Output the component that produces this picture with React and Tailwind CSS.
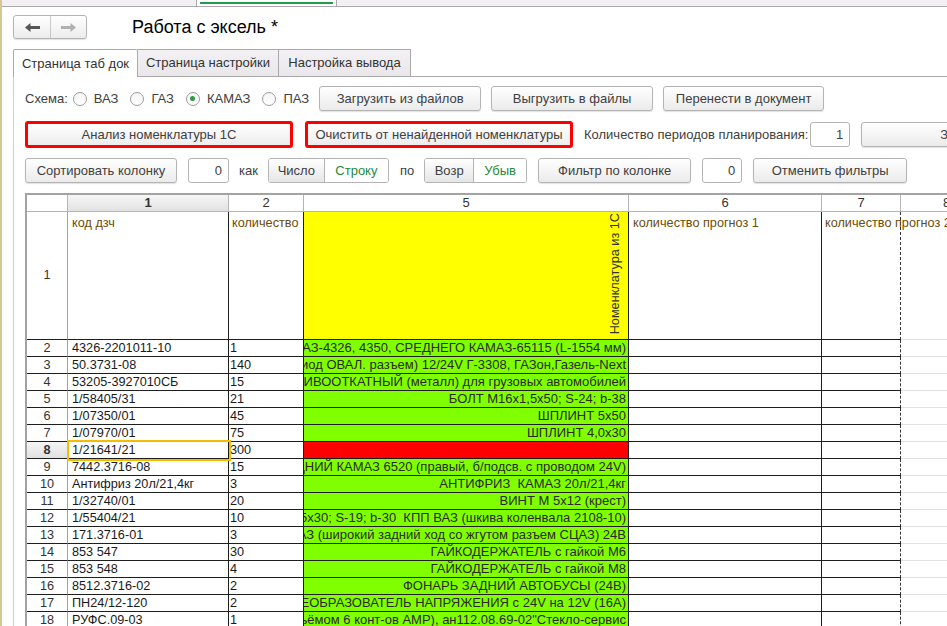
import React from 'react';

const FONT = '"Liberation Sans", Arial, sans-serif';

const rows = [
    ['4326-2201011-10', '1', 'ВАЛ КАРДАННЫЙ КАМАЗ-4326, 4350, СРЕДНЕГО КАМАЗ-65115 (L-1554 мм)'],
    ['50.3731-08', '140', 'ФАРА ПРОТИВОТУМАННАЯ (светодиод ОВАЛ. разъем) 12/24V Г-3308, ГАЗон,Газель-Next'],
    ['53205-3927010СБ', '15', 'УПОР ПРОТИВООТКАТНЫЙ (металл) для грузовых автомобилей'],
    ['1/58405/31', '21', 'БОЛТ М16х1,5х50; S-24; b-38'],
    ['1/07350/01', '45', 'ШПЛИНТ 5х50'],
    ['1/07970/01', '75', 'ШПЛИНТ 4,0х30'],
    ['1/21641/21', '300', null],
    ['7442.3716-08', '15', 'ФОНАРЬ ЗАДНИЙ КАМАЗ 6520 (правый, б/подсв. с проводом 24V)'],
    ['Антифриз 20л/21,4кг', '3', 'АНТИФРИЗ  КАМАЗ 20л/21,4кг'],
    ['1/32740/01', '20', 'ВИНТ М 5х12 (крест)'],
    ['1/55404/21', '10', 'БОЛТ М12х1,25х30; S-19; b-30  КПП ВАЗ (шкива коленвала 2108-10)'],
    ['171.3716-01', '3', 'ФОНАРЬ ЗАДНИЙ ПАЗ (широкий задний ход со жгутом разъем СЦАЗ) 24В'],
    ['853 547', '30', 'ГАЙКОДЕРЖАТЕЛЬ с гайкой М6'],
    ['853 548', '4', 'ГАЙКОДЕРЖАТЕЛЬ с гайкой М8'],
    ['8512.3716-02', '2', 'ФОНАРЬ ЗАДНИЙ АВТОБУСЫ (24В)'],
    ['ПН24/12-120', '2', 'ПРЕОБРАЗОВАТЕЛЬ НАПРЯЖЕНИЯ с 24V на 12V (16А)'],
    ['РУФС.09-03', '1', 'ФОНАРЬ задний (с разъёмом 6 конт-ов AMP), ан112.08.69-02"Стекло-сервис'],
];

const Btn = ({ children, className = '' }) => (
    <div className={`h-[25px] shrink-0 flex items-center justify-center rounded-[3px] border border-[#b4b4b4] bg-linear-to-b from-white to-[#ebebeb] shadow-[0_1px_1px_rgba(0,0,0,0.12)] text-[13px] text-[#404040] whitespace-nowrap ${className}`}>
        {children}
    </div>
);

const RedBtn = ({ children, className = '' }) => (
    <div className={`h-[27px] shrink-0 flex items-center justify-center rounded-[3px] border-[3px] border-[#ff0000] bg-linear-to-b from-white to-[#ededed] text-[13px] text-[#404040] whitespace-nowrap ${className}`}>
        {children}
    </div>
);

const Field = ({ value, className = '' }) => (
    <div className={`h-[25px] shrink-0 flex items-center justify-end pr-[6px] rounded-[3px] border border-[#b4b4b4] bg-white text-[13px] text-[#404040] ${className}`}>
        {value}
    </div>
);

const Radio = ({ label, checked }) => (
    <div className="flex items-center shrink-0">
        <div className="w-[14px] h-[14px] rounded-full border border-[#9c9c9c] bg-linear-to-b from-[#f4f4f4] to-white flex items-center justify-center">
            {checked && <div className="w-[5px] h-[5px] rounded-full bg-[#2e9a43]" />}
        </div>
        <span className="ml-[7px] text-[13px] text-[#404040]">{label}</span>
    </div>
);

const Segment = ({ left, right, lw, rw }) => (
    <div className="h-[25px] shrink-0 flex rounded-[3px] border border-[#b4b4b4] overflow-hidden text-[13px]">
        <div className={`flex items-center justify-center bg-linear-to-b from-white to-[#e6e6e6] text-[#404040] border-r border-[#b4b4b4] ${lw}`}>{left}</div>
        <div className={`flex items-center justify-center bg-white text-[#1f8a3a] ${rw}`}>{right}</div>
    </div>
);

const Arrow = ({ dir, color }) => (
    <svg width="15" height="9" viewBox="0 0 15 9">
        {dir === 'left' ? (
            <path d="M0 4.5 L5.5 0 V3 H15 V6 H5.5 V9 Z" fill={color} />
        ) : (
            <path d="M15 4.5 L9.5 0 V3 H0 V6 H9.5 V9 Z" fill={color} />
        )}
    </svg>
);

const cell = 'h-[17px] border-r border-b border-[#1e1e1e] text-[12.7px] leading-[16px] whitespace-pre overflow-hidden';
const dashedR = '[border-right-style:dashed] border-r-[#333]';

const App = () => {
    return (
        <div className="w-[947px] h-[626px] overflow-hidden bg-white border-l-2 border-[#d6c893]" style={{ fontFamily: FONT }}>
            {/* top window strip */}
            <div className="h-[7px] bg-[#f3f0f3] border-b border-[#a9a9a9] flex">
                <div className="ml-[194px] w-[141px] bg-white border-x border-[#a9a9a9]">
                    <div className="mt-[2px] mx-[3px] h-[2px] bg-[#1f9b4c]" />
                </div>
            </div>

            {/* header */}
            <div className="flex items-center mt-[8px] ml-[11px]">
                <div className="flex h-[24px] rounded-[3px] border border-[#b4b4b4] bg-linear-to-b from-white to-[#ececec] shadow-[0_1px_1px_rgba(0,0,0,0.12)]">
                    <div className="w-[37px] flex items-center justify-center border-r border-[#c8c8c8]">
                        <Arrow dir="left" color="#555555" />
                    </div>
                    <div className="w-[35px] flex items-center justify-center">
                        <Arrow dir="right" color="#b0b0b0" />
                    </div>
                </div>
                <h1 className="ml-[45px] text-[18px] text-black leading-none">Работа с эксель *</h1>
            </div>

            {/* tabs + panel */}
            <div className="ml-[11px] mt-[10px]">
                <div className="flex h-[28px] border-b border-[#a9a9a9] text-[13px] text-[#333]">
                    <div className="w-[125px] h-[28px] flex items-center justify-center bg-white border border-b-0 border-[#a9a9a9] rounded-t-[2px]">Страница таб док</div>
                    <div className="w-[141px] h-[27px] flex items-center justify-center bg-linear-to-b from-[#f3f1f3] to-[#e9e7e9] border-t border-r border-[#a9a9a9]">Страница настройки</div>
                    <div className="w-[132px] h-[27px] flex items-center justify-center bg-linear-to-b from-[#f3f1f3] to-[#e9e7e9] border-t border-r border-[#a9a9a9]">Настройка вывода</div>
                </div>

                <div className="border-l border-[#cdcdcd] pl-[11px] pt-[9px] h-[560px]">
                    {/* row 1 */}
                    <div className="flex items-center h-[25px]">
                        <span className="text-[13px] text-[#404040] mr-[5px] shrink-0">Схема:</span>
                        <Radio label="ВАЗ" />
                        <div className="ml-[12px]"><Radio label="ГАЗ" /></div>
                        <div className="ml-[12px]"><Radio label="КАМАЗ" checked /></div>
                        <div className="ml-[12px]"><Radio label="ПАЗ" /></div>
                        <Btn className="ml-[10px] w-[162px]">Загрузить из файлов</Btn>
                        <Btn className="ml-[10px] w-[162px]">Выгрузить в файлы</Btn>
                        <Btn className="ml-[10px] w-[161px]">Перенести в документ</Btn>
                    </div>

                    {/* row 2 */}
                    <div className="flex items-center mt-[10px] h-[27px]">
                        <RedBtn className="w-[268px]">Анализ номенклатуры 1С</RedBtn>
                        <RedBtn className="ml-[12px] w-[268px]">Очистить от ненайденной номенклатуры</RedBtn>
                        <span className="ml-[11px] text-[13px] text-[#404040] whitespace-nowrap shrink-0">Количество периодов планирования:</span>
                        <Field value="1" className="ml-[2px] w-[40px]" />
                        <Btn className="ml-[11px] w-[200px] !justify-start pl-[78px]">Заполнить</Btn>
                    </div>

                    {/* row 3 */}
                    <div className="flex items-center mt-[10px] h-[25px]">
                        <Btn className="w-[152px]">Сортировать колонку</Btn>
                        <Field value="0" className="ml-[11px] w-[41px]" />
                        <span className="ml-[10px] text-[13px] text-[#404040] shrink-0">как</span>
                        <div className="ml-[10px] shrink-0"><Segment left="Число" right="Строку" lw="w-[56px]" rw="w-[63px]" /></div>
                        <span className="ml-[11px] text-[13px] text-[#404040] shrink-0">по</span>
                        <div className="ml-[10px] shrink-0"><Segment left="Возр" right="Убыв" lw="w-[49px]" rw="w-[52px]" /></div>
                        <Btn className="ml-[11px] w-[153px]">Фильтр по колонке</Btn>
                        <Field value="0" className="ml-[11px] w-[40px]" />
                        <Btn className="ml-[11px] w-[154px]">Отменить фильтры</Btn>
                    </div>

                    {/* spreadsheet */}
                    <div className="mt-[10px] border-l-2 border-t-2 border-[#a3a3a3] w-[1000px]">
                        <div className="grid grid-cols-[41px_161px_75px_325px_193px_79px_200px]">
                            {/* column headers */}
                            <div className="h-[17px] border-r border-b border-[#b5b5b5]" />
                            <div className="h-[17px] border-r border-b border-[#b5b5b5] bg-linear-to-b from-[#f6f6f6] to-[#e2e2e2] text-[13px] font-bold text-[#333] text-center leading-[16px]">1</div>
                            <div className="h-[17px] border-r border-b border-[#b5b5b5] text-[13px] text-[#333] text-center leading-[16px]">2</div>
                            <div className="h-[17px] border-r border-b border-[#b5b5b5] text-[13px] text-[#333] text-center leading-[16px]">5</div>
                            <div className="h-[17px] border-r border-b border-[#b5b5b5] text-[13px] text-[#333] text-center leading-[16px]">6</div>
                            <div className="h-[17px] border-r border-b border-[#b5b5b5] text-[13px] text-[#333] text-center leading-[16px]">7</div>
                            <div className="h-[17px] border-b border-[#b5b5b5] text-[13px] text-[#333] text-center leading-[16px] w-[91px]">8</div>

                            {/* row 1 */}
                            <div className="h-[128px] border-r border-r-[#a3a3a3] border-b border-b-[#1e1e1e] flex items-center justify-center text-[12.7px] text-[#333]">1</div>
                            <div className="h-[128px] border-r border-b border-[#1e1e1e] px-[4px] pt-[2px] text-[12.7px] text-[#6b4d08]">код дзч</div>
                            <div className="h-[128px] border-r border-b border-[#1e1e1e] px-[3px] pt-[2px] text-[12.7px] text-[#6b4d08] overflow-hidden whitespace-nowrap">количество</div>
                            <div className="h-[128px] border-r border-b border-[#1e1e1e] bg-[#ffff00] flex justify-end items-end pr-[3px] pb-[5px]">
                                <span className="[writing-mode:vertical-rl] rotate-180 text-[12.7px] text-[#333] whitespace-nowrap">Номенклатура из 1С</span>
                            </div>
                            <div className="h-[128px] border-r border-b border-[#1e1e1e] px-[4px] pt-[2px] text-[12.7px] text-[#6b4d08] whitespace-nowrap">количество прогноз 1</div>
                            <div className={`h-[128px] border-r border-b border-[#1e1e1e] ${dashedR} px-[3px] pt-[2px] text-[12.7px] text-[#6b4d08] whitespace-nowrap`}>количество прогноз 2</div>
                            <div className="h-[128px] border-b border-[#e2e2e2]" />

                            {rows.map(([code, qty, name], i) => {
                                const n = i + 2;
                                const sel = n === 8;
                                return (
                                    <React.Fragment key={n}>
                                        <div className={`${cell} border-r-[#a3a3a3] text-center ${sel ? 'font-bold text-[#333] bg-linear-to-b from-[#f6f6f6] to-[#e0e0e0]' : 'text-[#333]'}`}>{n}</div>
                                        <div className={`${cell} px-[4px] text-[#1a1a1a] relative !overflow-visible`}>
                                            <div className="overflow-hidden">{code}</div>
                                            {sel && <div className="absolute -top-[2px] -left-[1px] -right-[3px] -bottom-[3px] border-2 border-[#f5bd00] z-20" />}
                                        </div>
                                        <div className={`${cell} px-[1px] text-[#1a1a1a]`}>{qty}</div>
                                        <div className={`${cell} !text-[13px] flex justify-end pr-[2px] text-[#2a2a2a] ${name ? 'bg-[#80ff00]' : 'bg-[#ff0000]'}`}>
                                            {name && <span className="shrink-0">{name}</span>}
                                        </div>
                                        <div className={cell} />
                                        <div className={`${cell} ${dashedR}`} />
                                        <div className="h-[17px] border-b border-[#e2e2e2]" />
                                    </React.Fragment>
                                );
                            })}
                        </div>
                    </div>
                </div>
            </div>
        </div>
    );
};

export default App;
